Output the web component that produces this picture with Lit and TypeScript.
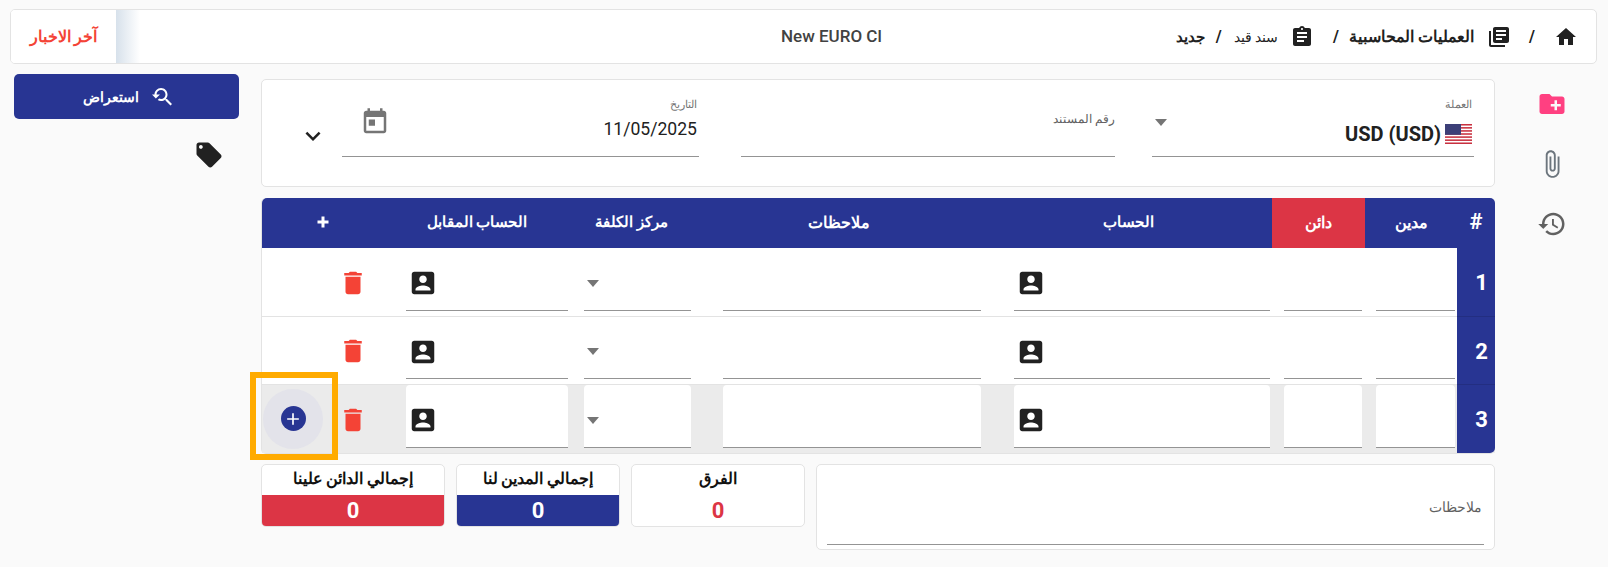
import { LitElement, html, svg, css } from "lit";
import { customElement } from "lit/decorators.js";

const P = {
  home: "M10 20v-6h4v6h5v-8h3L12 3 2 12h3v8z",
  lib: "M4 6H2v14c0 1.1.9 2 2 2h14v-2H4V6zm16-4H8c-1.1 0-2 .9-2 2v12c0 1.1.9 2 2 2h12c1.1 0 2-.9 2-2V4c0-1.1-.9-2-2-2zm-1 9H9V9h10v2zm-4 4H9v-2h6v2zm4-8H9V5h10v2z",
  assign: "M19 3h-4.18C14.4 1.84 13.3 1 12 1c-1.3 0-2.4.84-2.82 2H5c-1.1 0-2 .9-2 2v14c0 1.1.9 2 2 2h14c1.1 0 2-.9 2-2V5c0-1.1-.9-2-2-2zm-7 0c.55 0 1 .45 1 1s-.45 1-1 1-1-.45-1-1 .45-1 1-1zm2 14H7v-2h7v2zm3-4H7v-2h10v2zm0-4H7V7h10v2z",
  search: "M17.01 14h-.8l-.27-.27c.98-1.14 1.57-2.61 1.57-4.23 0-3.59-2.91-6.5-6.5-6.5s-6.5 3-6.5 6.5H2l3.84 4 4.16-4H6.51C6.51 7 8.53 5 11.01 5s4.5 2.01 4.5 4.5c0 2.48-2.02 4.5-4.5 4.5-.65 0-1.26-.14-1.82-.38L7.71 15.1c.97.57 2.09.9 3.3.9 1.61 0 3.08-.59 4.22-1.57l.27.27v.79l5.01 4.99L22 19l-4.99-5z",
  tag: "M21.41 11.58l-9-9C12.05 2.22 11.55 2 11 2H4c-1.1 0-2 .9-2 2v7c0 .55.22 1.05.59 1.42l9 9c.36.36.86.58 1.41.58.55 0 1.05-.22 1.41-.59l7-7c.37-.36.59-.86.59-1.41 0-.55-.23-1.06-.59-1.42zM5.5 7C4.67 7 4 6.33 4 5.5S4.67 4 5.5 4 7 4.67 7 5.5 6.33 7 5.5 7z",
  folder: "M20 6h-8l-2-2H4c-1.11 0-1.99.89-1.99 2L2 18c0 1.11.89 2 2 2h16c1.11 0 2-.89 2-2V8c0-1.11-.89-2-2-2zm-1 8h-3v3h-2v-3h-3v-2h3V9h2v3h3v2z",
  attach: "M16.5 6v11.5c0 2.21-1.79 4-4 4s-4-1.79-4-4V5c0-1.38 1.12-2.5 2.5-2.5s2.5 1.12 2.5 2.5v10.5c0 .55-.45 1-1 1s-1-.45-1-1V6H10v9.5c0 1.38 1.12 2.5 2.5 2.5s2.5-1.12 2.5-2.5V5c0-2.21-1.79-4-4-4S7 2.79 7 5v12.5c0 3.04 2.46 5.5 5.5 5.5s5.5-2.46 5.5-5.5V6h-1.5z",
  history: "M13 3c-4.97 0-9 4.03-9 9H1l3.89 3.89.07.14L9 12H6c0-3.87 3.13-7 7-7s7 3.13 7 7-3.13 7-7 7c-1.93 0-3.68-.79-4.94-2.06l-1.42 1.42C8.27 19.99 10.51 21 13 21c4.97 0 9-4.03 9-9s-4.03-9-9-9zm-1 5v5l4.28 2.54.72-1.21-3.5-2.08V8H12z",
  today: "M19 3h-1V1h-2v2H8V1H6v2H5c-1.11 0-1.99.9-1.99 2L3 19c0 1.1.89 2 2 2h14c1.1 0 2-.9 2-2V5c0-1.1-.9-2-2-2zm0 16H5V8h14v11zM7 10h5v5H7z",
  more: "M16.59 8.59L12 13.17 7.41 8.59 6 10l6 6 6-6z",
  contact: "M3 5v14c0 1.1.89 2 2 2h14c1.1 0 2-.9 2-2V5c0-1.1-.9-2-2-2H5c-1.11 0-2 .9-2 2zm12 4c0 1.66-1.34 3-3 3s-3-1.34-3-3 1.34-3 3-3 3 1.34 3 3zm-9 8c0-2 4-3.1 6-3.1s6 1.1 6 3.1v1H6v-1z",
  del: "M6 19c0 1.1.9 2 2 2h8c1.1 0 2-.9 2-2V7H6v12zM19 4h-3.5l-1-1h-5l-1 1H5v2h14V4z",
  add: "M19 13h-6v6h-2v-6H5v-2h6V5h2v6h6v2z",
};

const ic = (d: string, cls = "") =>
  html`<svg class="ic ${cls}" viewBox="0 0 24 24"><path d=${d}></path></svg>`;

const arrow = html`<svg class="arrow" viewBox="0 0 12 7"><path d="M0 0h12L6 7z"></path></svg>`;

const flag = html`<svg class="flag" viewBox="0 0 27 20" preserveAspectRatio="none">
  <rect width="27" height="20" fill="#fff"></rect>
  ${[0, 1, 2, 3, 4, 5, 6].map(
    (i) => svg`<rect y=${i * 3.08} width="27" height="1.54" fill="#c8303f"></rect>`
  )}
  <rect width="16" height="10.8" fill="#3c3f78"></rect>
</svg>`;

@customElement("app-root")
export class AppRoot extends LitElement {
  static styles = css`
    :host {
      display: block;
      direction: rtl;
      min-height: 567px;
      background: #fafafa;
      font-family: Roboto, sans-serif;
      color: #212121;
      padding-top: 9px;
      box-sizing: border-box;
    }
    * { box-sizing: border-box; }
    .ic { display: block; width: 30px; height: 30px; flex: none; fill: currentColor; }
    .ic24 { width: 24px; height: 24px; }
    .arrow { display: block; width: 12px; height: 7px; fill: #757575; flex: none; }
    .flag { display: block; width: 27px; height: 20px; flex: none; }

    .top {
      display: flex; height: 55px; margin: 0 11px 0 10px;
      background: #fff; border: 1px solid #e3e3e3; border-radius: 5px; overflow: hidden;
    }
    .crumbs {
      flex: 0 0 714px; display: flex; align-items: center; padding-right: 18px;
      font-size: 13.5px; color: #212121;
    }
    .crumbs b { font-weight: 700; white-space: nowrap; font-size: 15.6px; }
    .crumbs b.last { font-size: 15px; }
    .crumbs span { white-space: nowrap; }
    .sl { font-weight: 700; font-size: 16px; width: 5px; text-align: center; direction: ltr; }
    .sl-a { margin: 0 20px 0 18px; }
    .sl-b { margin: 0 11px 0 19px; }
    .sl-c { margin: 0 13px 0 11px; }
    .ci { margin-left: 13px; }
    .ci2 { margin-left: 12px; }
    .marq {
      flex: 1; min-width: 0; overflow: hidden; direction: ltr; white-space: nowrap;
      padding-left: 641px; padding-bottom: 2px; display: flex; align-items: center;
      font-size: 17px; font-weight: 500; color: #424242;
    }
    .fade { flex: 0 0 24px; background: linear-gradient(to right, #d7e1eb, rgba(255,255,255,0)); direction: ltr; }
    .news {
      flex: 0 0 105px; display: flex; align-items: center; justify-content: center;
      color: #f44336; font-size: 16px; font-weight: 700; background: #fff;
    }

    .body { display: flex; align-items: flex-start; padding-top: 10px; }
    .side {
      flex: 0 0 113px; display: flex; flex-direction: column; align-items: center;
      gap: 30px; padding-top: 15px;
    }
    .pink { color: #ff4081; }
    .grey { color: #6c757d; }
    .dgrey { color: #616161; }

    .main { flex: 0 0 1234px; padding-top: 5px; display: flex; flex-direction: column; }
    .card { background: #fff; border: 1px solid #e3e3e3; border-radius: 5px; }

    .filter { height: 108px; display: flex; align-items: flex-start; padding: 18px 20px 0 0; }
    .field { height: 59px; border-bottom: 1px solid #949494; position: relative; }
    .f-cur { flex: 0 0 322px; margin-left: 37px; }
    .f-doc { flex: 0 0 374px; margin-left: 42px; padding-top: 13px; font-size: 12px; color: #616161; line-height: 16px; }
    .f-date { flex: 0 0 357px; margin-left: 14px; display: flex; justify-content: space-between; }
    .lbl { display: block; font-size: 11px; line-height: 14px; color: #757575; padding-right: 2px; }
    .cur-row { display: flex; align-items: center; gap: 4px; margin-top: 10px; padding-right: 2px; }
    .cur-txt { font-size: 20px; font-weight: 700; direction: ltr; unicode-bidi: isolate; color: #212121; }
    .cur-row .arrow { margin-right: auto; margin-left: 3px; margin-top: -24px; }
    .date-val { font-size: 17.6px; line-height: 21px; margin-top: 7px; direction: ltr; text-align: right; padding-right: 2px; }
    .f-date .ic { color: #757575; margin: 9px 0 0 18px; }
    .chev { margin-top: 23px; color: #212121; }

    .table {
      margin-top: 11px; height: 256px; border-radius: 5px;
      background: #fff; border-left: 1px solid #e3e3e3; border-bottom: 1px solid #e3e3e3;
      position: relative;
    }
    .thead {
      display: grid; grid-template-columns: 38px 92px 93px 287px 298px 111px 198px 1fr;
      height: 50px; background: #283593; color: #fff; font-size: 15px; font-weight: 700;
      border-radius: 5px 5px 0 0; overflow: hidden;
    }
    .thead > div { display: flex; align-items: center; justify-content: center; padding-bottom: 2px; }
    .thead .big { font-size: 16px; }
    .thead .hn { padding-left: 6px; }
    .thead .hash { font-size: 22px; padding-bottom: 3px; }
    .thead .cr { background: #dc3545; }
    .thead .plus { padding-left: 6px; }
    .plus .ic { width: 16px; height: 16px; stroke: #fff; stroke-width: 2.5; }
    .row {
      display: grid; height: 69px; border-bottom: 1px solid #e3e3e3; position: relative;
      grid-template-columns: 38px 92px 93px 287px 277px 134px 178px 1fr;
    }
    .row.r2 { height: 68px; }
    .row.alt { height: 68px; border-bottom: 0; background: #ebebeb; }
    .num {
      background: #283593; color: #fff; font-size: 22px; font-weight: 700;
      display: flex; align-items: center; justify-content: center; padding-left: 11px;
      box-shadow: inset 0 -1px 0 rgba(0,0,0,.12); margin-bottom: -1px;
    }
    .alt .num { border-radius: 0 0 5px 0; margin-bottom: 0; box-shadow: none; }
    .inp {
      height: 63px; background: transparent; border-bottom: 1px solid #949494;
      display: flex; align-items: center; padding-top: 8px;
    }
    .r2 .inp { height: 62px; }
    .alt .inp { background: #fff; border-radius: 4px 4px 0 0; }
    .i-deb { margin: 0 2px 0 11px; }
    .i-cr { margin: 0 3px 0 12px; }
    .i-acc { margin: 0 2px 0 29px; }
    .i-note { margin: 0 4px 0 15px; }
    .i-cost { margin: 0 17px 0 10px; }
    .i-opp { margin: 0 6px 0 10px; }
    .contact { margin-right: auto; color: #212121; position: relative; left: 2px; }
    .i-cost .arrow { margin-right: auto; margin-left: 3px; }
    .act { display: flex; align-items: center; }
    .trash { color: #f44336; margin-right: 28px; margin-top: 1px; }

    .hl {
      position: absolute; left: -12px; top: -13px; width: 88px; height: 88px;
      border: 6px solid #ffab00; display: flex; align-items: center; justify-content: center;
      padding-top: 6px;
    }
    .hl-c {
      width: 60px; height: 60px; border-radius: 50%; background: #e3e3ea;
      display: flex; align-items: center; justify-content: center; margin-top: -1px; margin-left: -2px;
    }
    .hl-d {
      width: 25px; height: 25px; border-radius: 50%; background: #283593; color: #fff;
      display: flex; align-items: center; justify-content: center;
    }
    .hl-d .ic { width: 20px; height: 20px; }

    .foot { display: flex; gap: 11px; margin-top: 10px; align-items: flex-start; }
    .note { flex: 0 0 679px; height: 86px; padding: 0 10px; }
    .note-in {
      height: 80px; border-bottom: 1px solid #949494; font-size: 14px; color: #616161;
      padding: 34px 2px 0 0; line-height: 16px;
    }
    .sum {
      height: 63px; display: flex; flex-direction: column; overflow: hidden; text-align: center;
    }
    .sum .t { height: 30px; font-size: 16px; font-weight: 700; color: #111; line-height: 28px; }
    .sum .v {
      flex: 1; font-size: 22px; font-weight: 700; color: #fff;
      display: flex; align-items: center; justify-content: center;
    }
    .s-diff { flex: 0 0 174px; }
    .s-diff .v { color: #dc3545; }
    .s-deb { flex: 0 0 164px; }
    .s-deb .v { background: #283593; }
    .s-cr { flex: 0 0 184px; }
    .s-cr .v { background: #dc3545; }

    .left { flex: 0 0 225px; margin: 0 22px 0 14px; display: flex; flex-direction: column; }
    .btn {
      height: 45px; background: #283593; color: #fff; border-radius: 5px;
      display: flex; align-items: center; justify-content: center; gap: 11px; padding-left: 10px;
      font-size: 14px; font-weight: 700; border: 0; font-family: inherit;
    }
    .btn .ic { width: 24px; height: 24px; }
    .tag { margin: 21px 15px 0 0; color: #212121; }
  `;

  private row(n: number, cls = "") {
    const alt = cls === "alt";
    return html`<div class="row ${cls}">
      <div class="num">${n}</div>
      <div class="inp i-deb"></div>
      <div class="inp i-cr"></div>
      <div class="inp i-acc">${ic(P.contact, "contact")}</div>
      <div class="inp i-note"></div>
      <div class="inp i-cost">${arrow}</div>
      <div class="inp i-opp">${ic(P.contact, "contact")}</div>
      <div class="act">
        ${ic(P.del, "trash")}
        ${alt
          ? html`<div class="hl"><div class="hl-c"><div class="hl-d">${ic(P.add)}</div></div></div>`
          : ""}
      </div>
    </div>`;
  }

  render() {
    return html`
      <div class="top">
        <div class="crumbs">
          ${ic(P.home, "ic24")}
          <span class="sl sl-a">/</span>
          ${ic(P.lib, "ic24 ci")}
          <b>العمليات المحاسبية</b>
          <span class="sl sl-b">/</span>
          ${ic(P.assign, "ic24 ci2")}
          <span>سند قيد</span>
          <span class="sl sl-c">/</span>
          <b class="last">جديد</b>
        </div>
        <div class="marq">New EURO Clients</div>
        <div class="fade"></div>
        <div class="news">آخر الاخبار</div>
      </div>
      <div class="body">
        <div class="side">
          ${ic(P.folder, "pink")} ${ic(P.attach, "grey")} ${ic(P.history, "dgrey")}
        </div>
        <div class="main">
          <div class="card filter">
            <div class="field f-cur">
              <span class="lbl">العملة</span>
              <div class="cur-row">${flag}<span class="cur-txt">USD (USD)</span>${arrow}</div>
            </div>
            <div class="field f-doc">رقم المستند</div>
            <div class="field f-date">
              <div>
                <span class="lbl">التاريخ</span>
                <div class="date-val">11/05/2025</div>
              </div>
              ${ic(P.today)}
            </div>
            ${ic(P.more, "chev")}
          </div>
          <div class="table">
            <div class="thead">
              <div class="hash">#</div>
              <div class="big">مدين</div>
              <div class="cr big">دائن</div>
              <div>الحساب</div>
              <div class="big hn">ملاحظات</div>
              <div>مركز الكلفة</div>
              <div>الحساب المقابل</div>
              <div class="plus">${ic(P.add)}</div>
            </div>
            ${this.row(1)} ${this.row(2, "r2")} ${this.row(3, "alt")}
          </div>
          <div class="foot">
            <div class="card note"><div class="note-in">ملاحظات</div></div>
            <div class="card sum s-diff"><div class="t">الفرق</div><div class="v">0</div></div>
            <div class="card sum s-deb"><div class="t">إجمالي المدين لنا</div><div class="v">0</div></div>
            <div class="card sum s-cr"><div class="t">إجمالي الدائن علينا</div><div class="v">0</div></div>
          </div>
        </div>
        <div class="left">
          <button class="btn">${ic(P.search)}<span>استعراض</span></button>
          ${ic(P.tag, "tag")}
        </div>
      </div>
    `;
  }
}
